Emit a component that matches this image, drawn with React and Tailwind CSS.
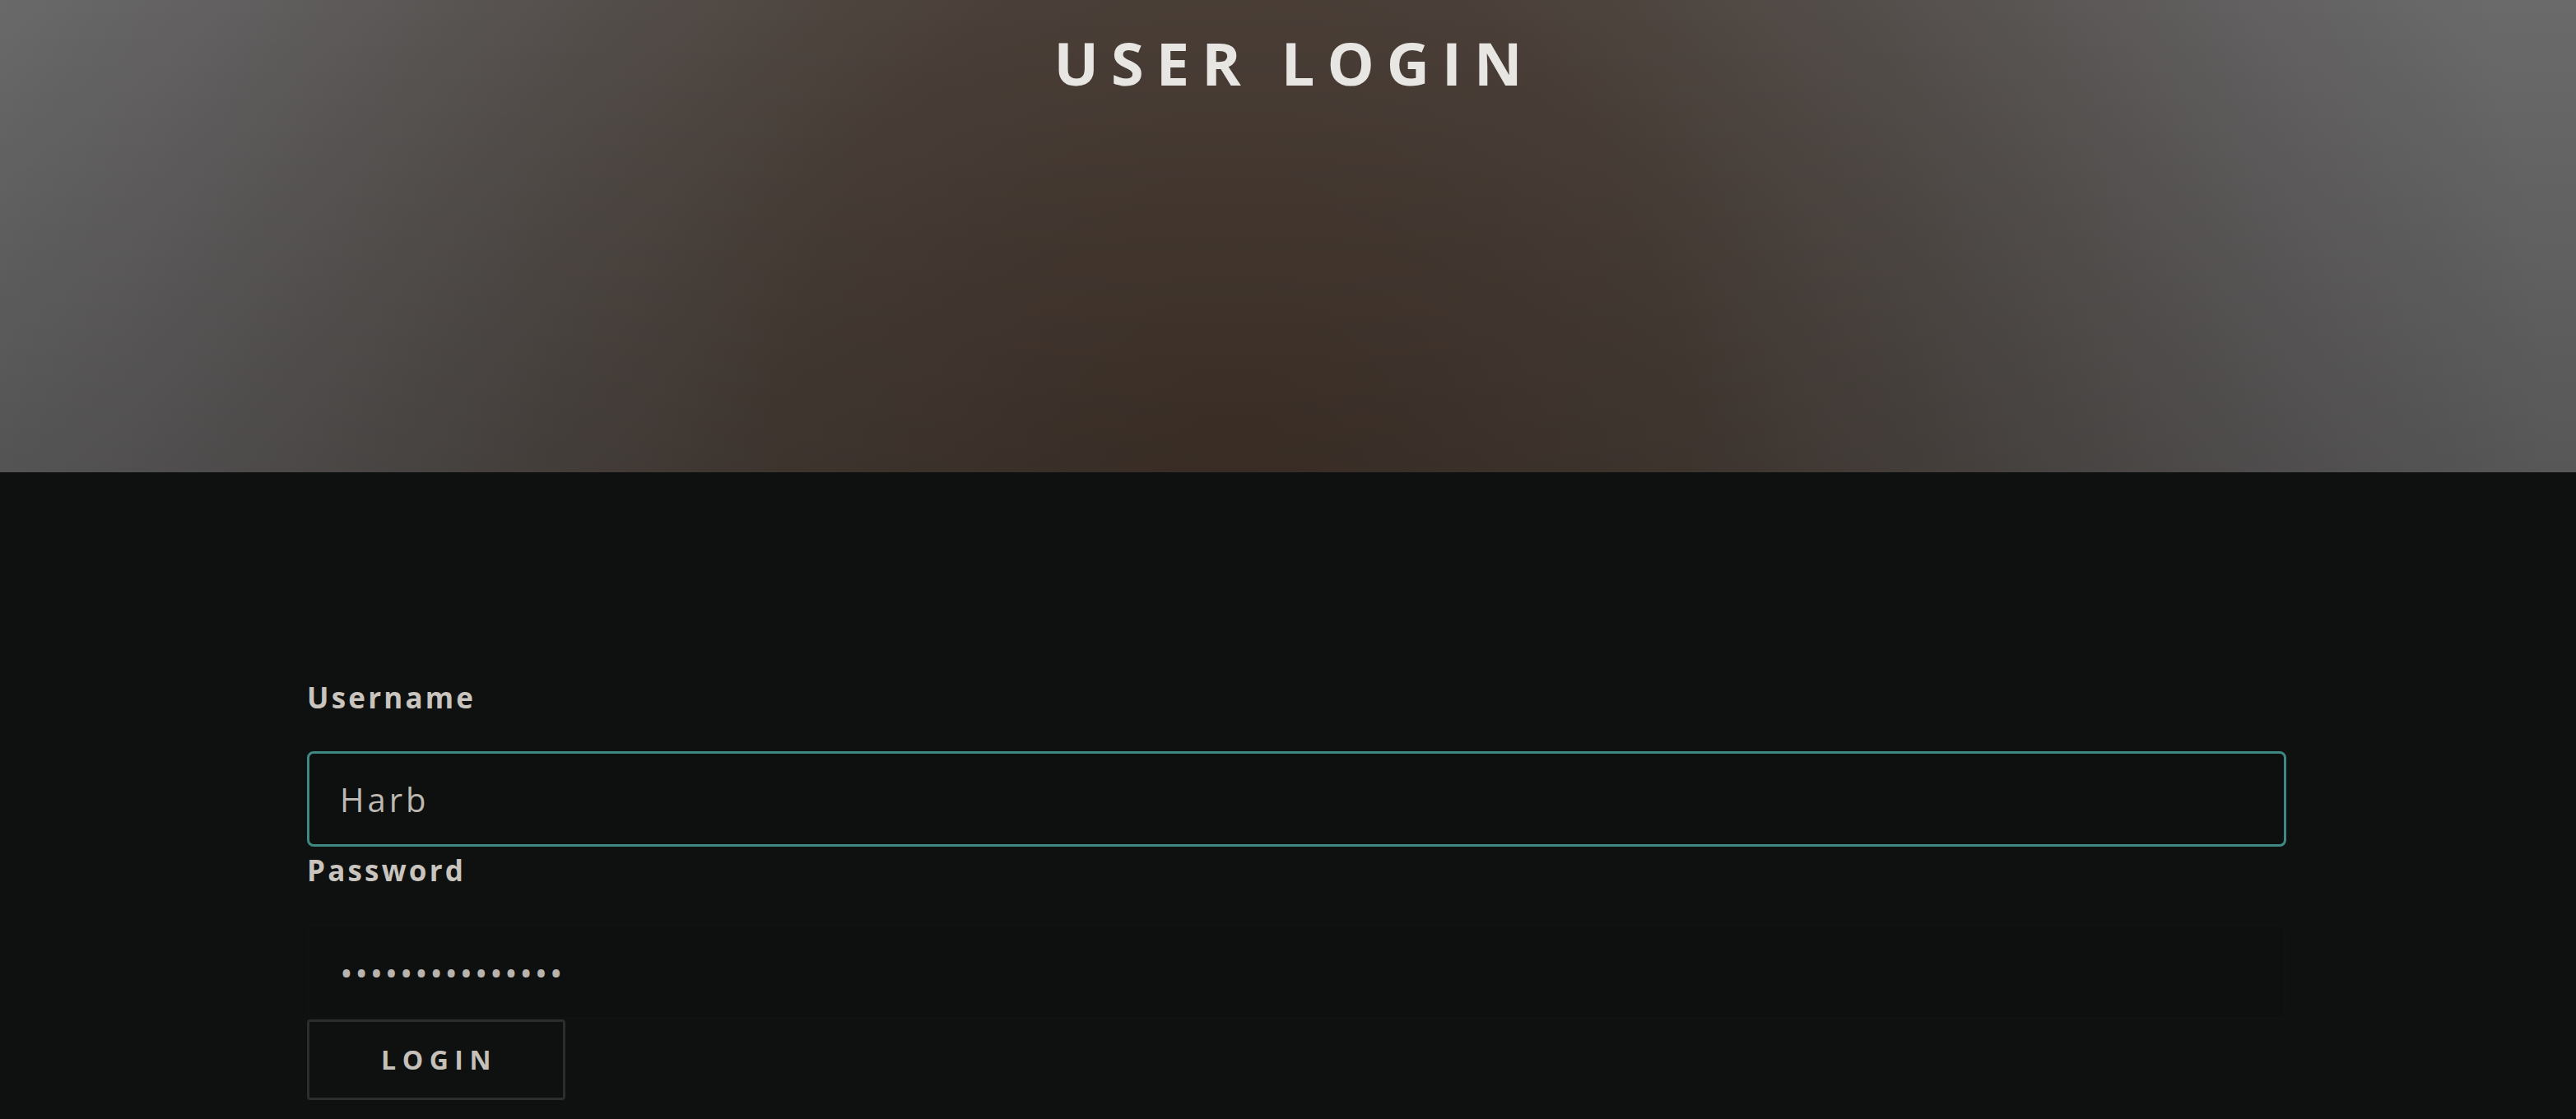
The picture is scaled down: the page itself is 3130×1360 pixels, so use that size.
import { useState } from "react";

const bodyFont = "font-['Open_Sans',sans-serif]";

export default function App() {
  const [username, setUsername] = useState("Harb");
  const [password, setPassword] = useState("abcdefghijklmno");

  return (
    <div className={`min-h-[1360px] bg-[#0f1111] ${bodyFont}`}>
      <header className="h-[574px] pt-[27px] [background-image:linear-gradient(to_bottom,rgba(0,0,0,0),rgba(0,0,0,0.18)),radial-gradient(ellipse_1600px_2000px_at_1500px_620px,#44352c_0%,#4a3f38_35%,#55504d_60%,#636162_85%,#6a6a6b_100%)]">
        <h1 className="text-center text-[72px] leading-[98px] font-bold tracking-[0.21em] pl-[0.21em] text-[#e8e6e2]">
          USER LOGIN
        </h1>
      </header>

      <form className="ml-[373px] w-[2405px] pt-[250px]" onSubmit={(event) => event.preventDefault()}>
        <label className="block">
          <span className="block text-[35px] leading-[48px] font-bold tracking-[3.2px] text-[#c9c4be] mb-[41px]">
            Username
          </span>
          <input
            className="block h-[116px] w-full rounded-[8px] border-[3px] border-[#3e8a82] bg-[#0e1010] px-[37px] text-[40px] tracking-[4px] text-[#bdb8b2] outline-none"
            value={username}
            onChange={(event) => setUsername(event.target.value)}
          />
        </label>

        <label className="block">
          <span className="block mt-[5px] text-[35px] leading-[48px] font-bold tracking-[3.2px] text-[#c9c4be] mb-[41px]">
            Password
          </span>
          <input
            type="password"
            className="block h-[116px] w-full rounded-[8px] border-[3px] border-[#101212] bg-[#0e1010] px-[37px] text-[42px] tracking-[2.4px] text-[#b8b3ac] outline-none"
            value={password}
            onChange={(event) => setPassword(event.target.value)}
          />
        </label>

        <button
          type="submit"
          className="block h-[98px] w-[314px] rounded-[4px] border-[3px] border-[#2b2e2f] bg-transparent pl-[7px] text-[32px] font-bold tracking-[7.5px] text-[#c5c0ba]"
        >
          LOGIN
        </button>
      </form>
    </div>
  );
}
